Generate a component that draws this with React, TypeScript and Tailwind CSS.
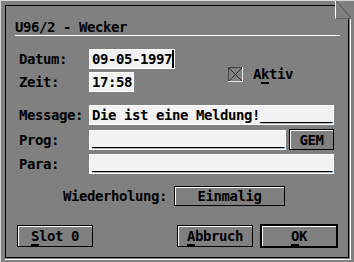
import type { ReactNode } from 'react';

function Field({ className, children }: { className: string; children: ReactNode }) {
  return (
    <div
      className={`flex h-[20px] shrink-0 items-center whitespace-nowrap border border-white bg-[#f2f2f2] pl-[2px] ${className}`}
    >
      {children}
    </div>
  );
}

function Btn({ className, children }: { className: string; children: ReactNode }) {
  return (
    <div
      className={`flex shrink-0 items-center justify-center whitespace-nowrap border border-black bg-[#808080] shadow-[inset_1px_1px_0_#ffffff] ${className}`}
    >
      {children}
    </div>
  );
}

function Key({ children }: { children: ReactNode }) {
  return <span className="underline decoration-2 underline-offset-[3px]">{children}</span>;
}

export default function App() {
  return (
    <div className="relative h-[262px] w-[354px] overflow-hidden whitespace-nowrap bg-[#808080] font-['DejaVu_Sans_Mono',monospace] text-[14px] font-bold leading-[16px] tracking-[-0.43px] text-black">
      <div className="h-full w-full border-l border-t border-[#d8d8d8] pl-[4px] pt-[4px]">
        <div className="h-[255px] w-[346px] border-b border-r border-white pb-[1px] pr-[1px]">
          <div className="flex h-full w-full flex-col border border-black">
            {/* title */}
            <div className="pl-[9px] pt-[13px]">U96/2 - Wecker</div>
            <div className="ml-[9px] h-px w-[325px] bg-white" />

            {/* datum / zeit / aktiv */}
            <div className="ml-[13px] mt-[13px] flex">
              <div className="flex flex-col">
                <div className="flex items-center">
                  <span className="w-[70px]">Datum:</span>
                  <Field className="w-[86px]">
                    <span>09-05-1997</span>
                    <span className="h-[18px] w-[2px] shrink-0 bg-black" />
                  </Field>
                </div>
                <div className="mt-[3px] flex items-center">
                  <span className="w-[70px]">Zeit:</span>
                  <Field className="w-[45px]">17:58</Field>
                </div>
              </div>
              <div className="ml-[53px] mt-[18px] flex items-start">
                <svg width="15" height="15" viewBox="0 0 15 15" className="shrink-0">
                  <rect x="0" y="0" width="15" height="15" fill="#808080" />
                  <path d="M0.5 15 V0.5 H15" stroke="#404040" fill="none" />
                  <path d="M14.5 0 V14.5 H0" stroke="#e8e8e8" fill="none" />
                  <path d="M1 1 L14 14 M14 1 L1 14" stroke="#303030" />
                </svg>
                <span className="ml-[10px] mt-[-1px]">
                  A<Key>k</Key>tiv
                </span>
              </div>
            </div>

            {/* message / prog / para */}
            <div className="ml-[13px] mt-[13px] flex items-center">
              <span className="w-[70px]">Message:</span>
              <Field className="w-[245px]">Die ist eine Meldung!_________</Field>
            </div>
            <div className="ml-[13px] mt-[4px] flex items-end">
              <span className="w-[70px] self-center">Prog:</span>
              <Field className="w-[197px]">________________________</Field>
              <Btn className="ml-[3px] h-[21px] w-[45px]">GEM</Btn>
            </div>
            <div className="ml-[13px] mt-[4px] flex items-center">
              <span className="w-[70px]">Para:</span>
              <Field className="w-[245px]">______________________________</Field>
            </div>

            {/* wiederholung */}
            <div className="ml-[57px] mt-[12px] flex items-center">
              <span>Wiederholung:</span>
              <Btn className="ml-[7px] h-[20px] w-[111px]">Einmalig</Btn>
            </div>

            {/* buttons */}
            <div className="ml-[11px] mt-[18px] flex items-center">
              <Btn className="h-[22px] w-[76px]">
                <span>
                  <Key>S</Key>lot 0
                </span>
              </Btn>
              <Btn className="ml-[84px] h-[22px] w-[76px]">
                <span>
                  <Key>A</Key>bbruch
                </span>
              </Btn>
              <Btn className="ml-[7px] h-[24px] w-[78px] border-2">
                <span>
                  <Key>O</Key>K
                </span>
              </Btn>
            </div>
          </div>
        </div>
      </div>

      {/* close box */}
      <div className="absolute right-[3px] top-[1px] h-[18px] w-[16px] border-b border-l border-[#606060] border-l-white bg-[#808080]">
        <svg width="15" height="17" viewBox="0 0 15 17" className="block">
          <path d="M0 0 L15 17" stroke="#505050" />
        </svg>
      </div>
    </div>
  );
}
